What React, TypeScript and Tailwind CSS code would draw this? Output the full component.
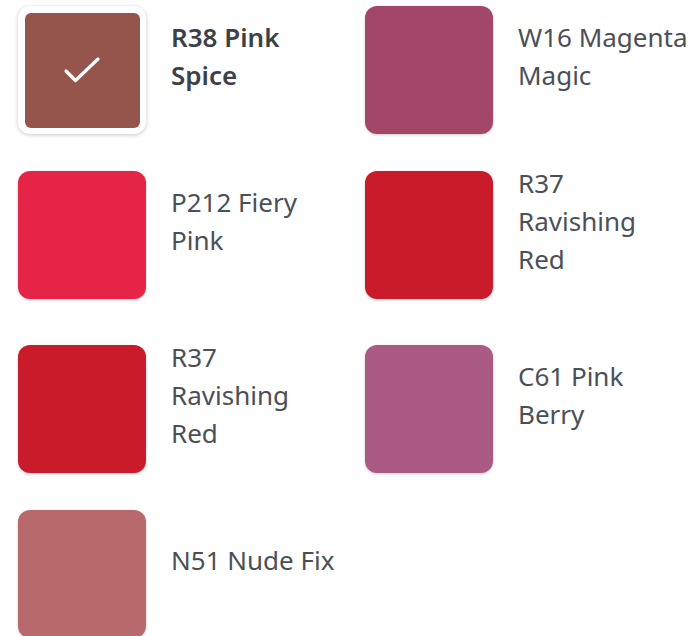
import React from 'react';

const shades = [
  { lines: ['R38 Pink', 'Spice'], color: 'bg-[#95554c]', selected: true },
  { lines: ['W16 Magenta', 'Magic'], color: 'bg-[#a34769]' },
  { lines: ['P212 Fiery', 'Pink'], color: 'bg-[#e52448]' },
  { lines: ['R37', 'Ravishing', 'Red'], color: 'bg-[#c91b2a]' },
  { lines: ['R37', 'Ravishing', 'Red'], color: 'bg-[#c91b2a]' },
  { lines: ['C61 Pink', 'Berry'], color: 'bg-[#ab5a84]' },
  { lines: ['N51 Nude Fix'], color: 'bg-[#b8696b]' },
];

const Check = () => (
  <svg width="38" height="28" viewBox="0 0 38 28" fill="none">
    <path d="M3 15l9.5 9.5L35 3" stroke="white" strokeWidth="3.2" strokeLinecap="round" strokeLinejoin="round" />
  </svg>
);

export default function App() {
  return (
    <div className="w-[700px] h-[636px] overflow-hidden bg-white pt-[6px] pl-[18px]" style={{ fontFamily: '"Noto Sans", sans-serif' }}>
      <div className="grid grid-cols-[347px_335px] grid-rows-[165px_174px_165px_auto]">
        {shades.map((s, i) => (
          <div key={i} className="flex items-start">
            {s.selected ? (
              <div className="w-[128px] h-[128px] shrink-0 rounded-xl bg-white shadow-[0_1px_4px_rgba(0,0,0,0.22)] flex items-center justify-center">
                <div className={`w-[115px] h-[115px] rounded-md ${s.color} flex items-center justify-center`}>
                  <Check />
                </div>
              </div>
            ) : (
              <div className={`w-[128px] h-[128px] shrink-0 rounded-xl ${s.color} shadow-[0_1px_3px_rgba(0,0,0,0.2)]`} />
            )}
            <div className="ml-[25px] h-[100px] flex items-center">
              <div
                className={`text-[26px] leading-[38px] whitespace-nowrap ${s.selected ? 'font-semibold text-[#3c4147]' : 'text-[#4b5056]'}`}
              >
                {s.lines.map((l, j) => (
                  <div key={j}>{l}</div>
                ))}
              </div>
            </div>
          </div>
        ))}
      </div>
    </div>
  );
}
